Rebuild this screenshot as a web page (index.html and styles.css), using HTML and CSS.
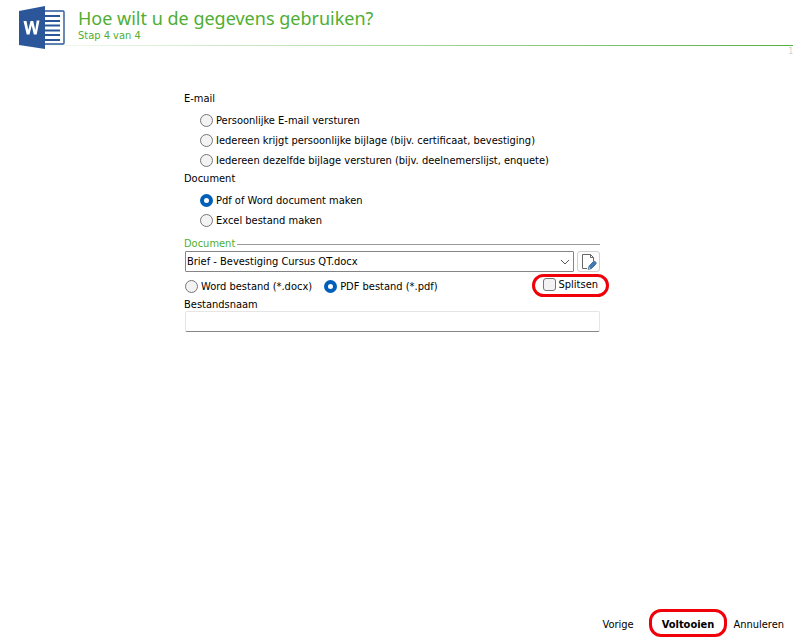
FILE: index.html
```html
<!DOCTYPE html>
<html lang="nl">

<head>
    <meta charset="UTF-8">
    <meta name="viewport" content="width=device-width, initial-scale=1.0">
    <title>Hoe wilt u de gegevens gebruiken?</title>
    <link rel="stylesheet" href="styles.css">
</head>

<body>

    <header class="header">
        <svg class="word-logo" width="48" height="44" viewBox="0 0 48 44" aria-hidden="true">
            <rect x="22" y="5" width="24" height="33" rx="1" fill="#fff" stroke="#2b579a" stroke-width="1.4"/>
            <path d="M26 10H42M26 15H42M26 19.5H42M26 24.500H42M26 29H42M26 34H42" stroke="#2b579a" stroke-width="1.8"/>
            <path d="M1 5L27 0V43L1 39Z" fill="#2b579a"/>
            <path d="M5.500 15H8.500L10.300 24L12.500 15H15.200L17.300 24L18.700 14.500H21.500L18.700 28.500H15.800L13.700 19.500L11.500 28.500H8.700Z" fill="#fff"/>
        </svg>
        <div class="header-text">
            <h1 class="title">Hoe wilt u de gegevens gebruiken?</h1>
            <p class="step">Stap 4 van 4</p>
        </div>
    </header>
    <div class="header-line"></div>
    <div class="page-mark">1</div>

    <form class="wizard">
        <main class="content">
            <div class="group-title">E-mail</div>
            <div class="options">
                <label class="option"><input type="radio" name="actie">Persoonlijke E-mail versturen</label>
                <label class="option"><input type="radio" name="actie">Iedereen krijgt persoonlijke bijlage (bijv. certificaat, bevestiging)</label>
                <label class="option"><input type="radio" name="actie">Iedereen dezelfde bijlage versturen (bijv. deelnemerslijst, enquete)</label>
            </div>
            <div class="group-title">Document</div>
            <div class="options">
                <label class="option"><input type="radio" name="actie" checked>Pdf of Word document maken</label>
                <label class="option"><input type="radio" name="actie">Excel bestand maken</label>
            </div>

            <label class="section" for="document">Document</label>
            <div class="document-row">
                <div class="select-box">
                    <select id="document" class="document-select">
                        <option>Brief - Bevestiging Cursus QT.docx</option>
                    </select>
                    <svg class="chevron" width="10" height="6" viewBox="0 0 10 6" aria-hidden="true">
                        <path d="M1 1L5 5L9 1" fill="none" stroke="#555"/>
                    </svg>
                </div>
                <button type="button" class="edit-button" aria-label="Document bewerken">
                    <svg width="16" height="16" viewBox="0 0 16 16" aria-hidden="true">
                        <path d="M6 14.500H1.500V.5H9.500L12.500 3.500V7" fill="#fff" stroke="#666"/>
                        <path d="M9.500 .5V3.500H12.500" fill="none" stroke="#666"/>
                        <path d="M7.500 15L8.500 11.500L12.500 7.500Q14 7 15 8.500Q15.500 9.500 14.500 10.500L10.500 14.500Z" fill="#3f7cb5" stroke="#2c5c8c" stroke-width=".8"/>
                        <path d="M7 15.500L8 12.500L10 14.500Z" fill="#e8eef4" stroke="#2c5c8c" stroke-width=".6"/>
                    </svg>
                </button>
            </div>

            <div class="format-row">
                <label class="format"><input type="radio" name="formaat">Word bestand (*.docx)</label>
                <label class="format"><input type="radio" name="formaat" checked>PDF bestand (*.pdf)</label>
                <label class="split highlight"><input type="checkbox">Splitsen</label>
            </div>

            <label class="name-label" for="bestandsnaam">Bestandsnaam</label>
            <input type="text" id="bestandsnaam" class="name-input">
        </main>

        <footer class="footer">
            <button type="button" class="nav-button">Vorige</button>
            <button type="submit" class="nav-button finish highlight">Voltooien</button>
            <button type="button" class="nav-button">Annuleren</button>
        </footer>
    </form>

</body>

</html>
```

FILE: styles.css
```css
* {
    box-sizing: border-box;
}

body {
    display: flex;
    flex-direction: column;
    min-height: 100vh;
    margin: 0;
    background-color: #fff;
    color: #000;
    font-family: Tahoma, "DejaVu Sans Condensed", "DejaVu Sans", sans-serif;
    font-size: 11px;
}

button,
input,
select {
    margin: 0;
    color: inherit;
    font: inherit;
}

.header {
    display: flex;
    gap: 12px;
    height: 45px;
    padding: 6px 0 0 18px;
}

.word-logo {
    position: relative;
    flex: none;
    z-index: 1;
}

.header-text {
    padding-top: 2px;
    color: #4fae32;
}

.title {
    margin: 0;
    font-family: Tahoma, "Noto Sans", sans-serif;
    font-size: 18px;
    font-weight: normal;
    line-height: 20px;
}

.step {
    margin: 0;
    line-height: 15px;
}

.header-line {
    height: 1px;
    background: linear-gradient(to right, #fff, #55b040);
}

.page-mark {
    height: 12px;
    color: #ccc;
    font-size: 8px;
    line-height: 12px;
    text-align: right;
}

.wizard {
    display: flex;
    flex: 1;
    flex-direction: column;
}

.content {
    display: flex;
    flex: 1;
    flex-direction: column;
    width: 100%;
    max-width: 600px;
    padding: 32px 0 0 184px;
}

.group-title {
    line-height: 18px;
}

.options {
    padding: 2px 0 0 16px;
}

.option,
.format,
.split {
    display: flex;
    align-items: center;
    gap: 3px;
    white-space: nowrap;
}

.option {
    height: 20px;
}

input[type="radio"],
input[type="checkbox"] {
    flex: none;
    width: 13px;
    height: 13px;
    appearance: none;
    border: 1px solid #767676;
    background-color: #f3f3f3;
}

input[type="radio"] {
    border-radius: 50%;
}

input[type="radio"]:checked {
    border: 4px solid #005fb8;
    background-color: #fff;
}

input[type="checkbox"] {
    border-radius: 3px;
}

input[type="checkbox"]:checked {
    background-color: #005fb8;
}

.section {
    display: flex;
    gap: 2px;
    margin-top: 6px;
    color: #4fae32;
    line-height: 15px;
}

.section::after {
    content: "";
    flex: 1;
    height: 8px;
    border-bottom: 1px solid #999;
}

.document-row {
    display: flex;
    gap: 3px;
    padding-left: 1px;
}

.select-box {
    display: grid;
    flex: 1;
    align-items: center;
}

.select-box > * {
    grid-area: 1 / 1;
}

.document-select {
    width: 100%;
    height: 21px;
    padding: 0 20px 0 1px;
    appearance: none;
    border: 1px solid #858585;
    border-radius: 1px;
    background-color: #fff;
}

.chevron {
    justify-self: end;
    margin-right: 4px;
    pointer-events: none;
}

.edit-button {
    display: flex;
    align-items: center;
    justify-content: center;
    width: 23px;
    height: 21px;
    padding: 0;
    border: 1px solid #d0d0d0;
    border-radius: 3px;
    background-color: #fdfdfd;
}

.format-row {
    display: flex;
    align-items: flex-start;
    gap: 12px;
    height: 24px;
    margin-top: 2px;
    padding-left: 1px;
}

.format {
    height: 25px;
}

.highlight {
    border: 3px solid #f00008;
    border-radius: 12px;
}

.split {
    height: 23px;
    margin: 0 -9px 0 auto;
    padding: 0 8px 2px 8px;
}

.name-label {
    line-height: 13px;
}

.name-input {
    height: 21px;
    margin-left: 1px;
    border: 1px solid #e5e5e5;
    border-bottom-color: #858585;
    border-radius: 2px;
    background-color: #fff;
}

.footer {
    display: flex;
    align-items: center;
    justify-content: flex-end;
    gap: 6px;
    padding: 0 9px 5px;
}

.nav-button {
    padding: 3px 0 0;
    border: none;
    background: none;
}

.finish {
    height: 28px;
    padding: 3px 10px 0;
    border: 3px solid #f00008;
    font-weight: bold;
}

.nav-button:first-child {
    margin-right: 9px;
}
```
